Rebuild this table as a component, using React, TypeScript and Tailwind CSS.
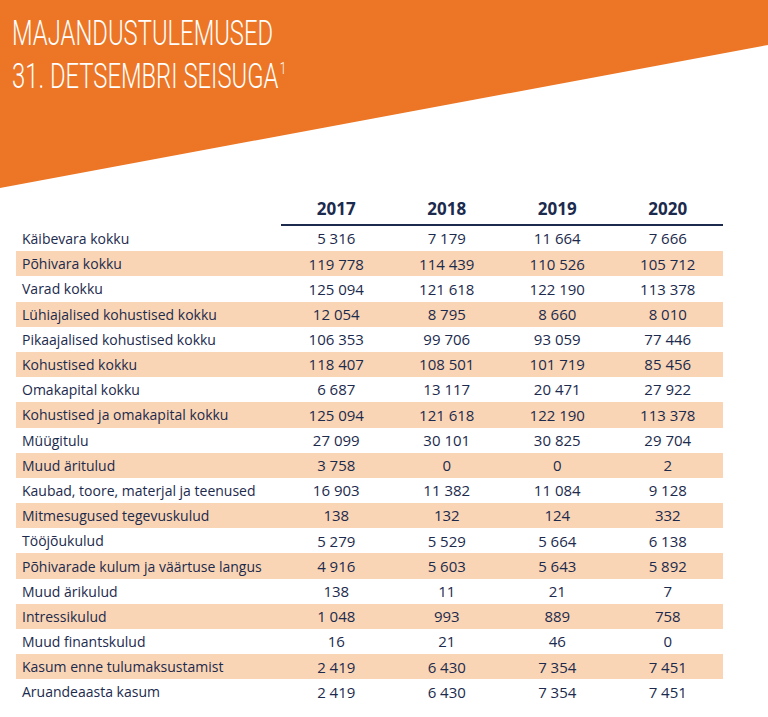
const years = ["2017", "2018", "2019", "2020"];

const rows: [string, string[]][] = [
  ["Käibevara kokku", ["5 316", "7 179", "11 664", "7 666"]],
  ["Põhivara kokku", ["119 778", "114 439", "110 526", "105 712"]],
  ["Varad kokku", ["125 094", "121 618", "122 190", "113 378"]],
  ["Lühiajalised kohustised kokku", ["12 054", "8 795", "8 660", "8 010"]],
  ["Pikaajalised kohustised kokku", ["106 353", "99 706", "93 059", "77 446"]],
  ["Kohustised kokku", ["118 407", "108 501", "101 719", "85 456"]],
  ["Omakapital kokku", ["6 687", "13 117", "20 471", "27 922"]],
  ["Kohustised ja omakapital kokku", ["125 094", "121 618", "122 190", "113 378"]],
  ["Müügitulu", ["27 099", "30 101", "30 825", "29 704"]],
  ["Muud äritulud", ["3 758", "0", "0", "2"]],
  ["Kaubad, toore, materjal ja teenused", ["16 903", "11 382", "11 084", "9 128"]],
  ["Mitmesugused tegevuskulud", ["138", "132", "124", "332"]],
  ["Tööjõukulud", ["5 279", "5 529", "5 664", "6 138"]],
  ["Põhivarade kulum ja väärtuse langus", ["4 916", "5 603", "5 643", "5 892"]],
  ["Muud ärikulud", ["138", "11", "21", "7"]],
  ["Intressikulud", ["1 048", "993", "889", "758"]],
  ["Muud finantskulud", ["16", "21", "46", "0"]],
  ["Kasum enne tulumaksustamist", ["2 419", "6 430", "7 354", "7 451"]],
  ["Aruandeaasta kasum", ["2 419", "6 430", "7 354", "7 451"]],
];

export default function App() {
  return (
    <div className="relative h-[717px] w-[768px] overflow-hidden bg-white text-[#1c2a4d] [font-family:'Open_Sans',sans-serif]">
      <header className="h-[188px] bg-[#ec7625] pl-[12px] pt-[12px] [clip-path:polygon(0_0,100%_0,100%_45px,0_100%)]">
        <h1 className="origin-left scale-x-[0.68] text-[35px] font-light uppercase leading-[43px] text-white [font-family:Roboto,sans-serif]">
          <span className="block">Majandustulemused</span>
          <span className="block">
            31. Detsembri seisuga
            <sup className="ml-[2px] text-[17px] align-[6px]">1</sup>
          </span>
        </h1>
      </header>

      <div className="ml-[16px] mt-[7px] w-[707px]">
        <div className="grid grid-cols-[265px_repeat(4,1fr)]">
          <div />
          <div className="col-span-4 grid grid-cols-4 border-b-2 border-[#1c2a4d] pb-[2px]">
            {years.map((y) => (
              <div key={y} className="h-[27px] text-center text-[17px] font-bold leading-[27px]">
                {y}
              </div>
            ))}
          </div>
        </div>

        {rows.map(([label, values], i) => (
          <div
            key={label}
            className={`grid h-[25.2px] grid-cols-[265px_repeat(4,1fr)] items-center ${
              i % 2 === 1 ? "bg-[#f9d5b5]" : ""
            }`}
          >
            <div className="pl-[6px] text-[14px]">{label}</div>
            {values.map((v, j) => (
              <div key={j} className="text-center text-[15px]">
                {v}
              </div>
            ))}
          </div>
        ))}
      </div>
    </div>
  );
}
